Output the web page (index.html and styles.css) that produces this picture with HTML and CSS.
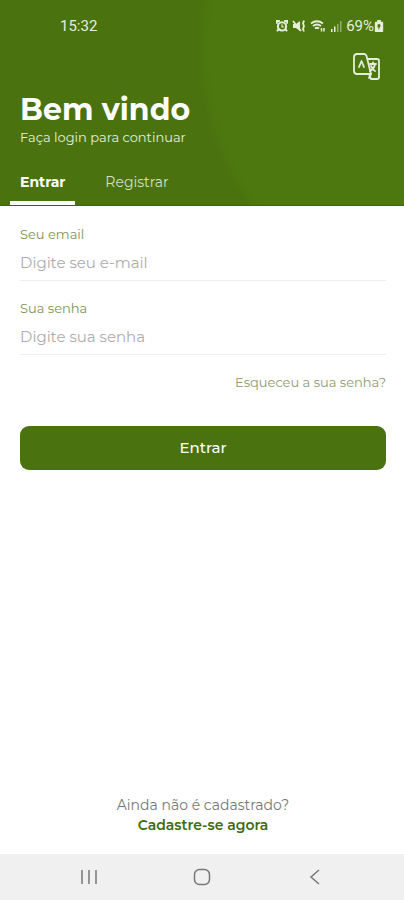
FILE: index.html
```html
<!DOCTYPE html>
<html lang="pt-BR">
<head>
    <meta charset="UTF-8">
    <meta name="viewport" content="width=device-width, initial-scale=1">
    <title>Entrar</title>
    <link rel="stylesheet" href="styles.css">
</head>
<body>
    <header class="header">
        <div class="status">
            <span class="status-time">15:32</span>
            <div class="status-icons">
                <svg width="12" height="12" viewBox="0 0 14 14" fill="none" stroke="currentColor" stroke-width="2.400">
                    <circle cx="7" cy="7.500" r="4.800"/>
                    <path d="M1 4.500V1h3.500M9.500 1H13v3.500M3 11l-2 2M11 11l2 2"/>
                    <path d="M7 5v3h2" stroke-width="1.300"/>
                </svg>
                <svg width="14" height="14" viewBox="0 0 14 14" fill="none" stroke="currentColor" stroke-width="1.800">
                    <path d="M1 5h3l4-3v10L4 9H1z" fill="currentColor" stroke="none"/>
                    <path d="M1 2l8 10"/>
                    <path d="M12 1.500l-1 3 1 2.500-1 3 1 2.500"/>
                </svg>
                <svg width="16" height="14" viewBox="0 0 16 14" fill="none" stroke="currentColor" stroke-width="1.800">
                    <path d="M1 4.500q6-4.500 12 0M3 7q4-3 8 0M5 9.500q2-1.500 4 0"/>
                    <path d="M11.500 9v3.500M14 9v3.500" stroke-width="1.500"/>
                </svg>
                <svg width="12" height="14" viewBox="0 0 12 14" fill="currentColor">
                    <path d="M1 10h1.500v3H1zM4 7.500h1.500V13H4z"/>
                    <path d="M7 5h1.500v8H7zM10 2h1.500v11H10z" opacity=".45"/>
                </svg>
                <span class="battery">69%
                    <svg width="10" height="13" viewBox="0 0 10 14">
                        <path d="M3 0h4v2h1.500q1 0 1 1v9q0 1-1 1h-7q-1 0-1-1V3q0-1 1-1H3z" fill="currentColor"/>
                        <path d="M3.500 4.500h2.500q1.500 1 0 3L4.500 11V8h-1z" fill="#4a730f"/>
                    </svg>
                </span>
            </div>
        </div>
        <div class="intro">
            <div>
                <h1>Bem vindo</h1>
                <p>Faça login para continuar</p>
            </div>
            <button class="language" type="button" aria-label="Idioma">
                <svg width="28" height="28" viewBox="0 0 28 28" fill="none" stroke="currentColor" stroke-width="1.800" stroke-linejoin="round" stroke-linecap="round">
                    <path d="M5 2h7q2 0 2.500 2L19 22H5q-3 0-3-3V5q0-3 3-3z"/>
                    <path d="M16 7h9q2 0 2 2v16q0 2-2 2h-6l-2-5"/>
                    <path d="M7 15l2.500-6L12 15"/>
                    <path d="M18 12h6M21 10.500V12M23 12q-1 5-5 7M19 14q2 4 4 5M19 22l-2 4"/>
                </svg>
            </button>
        </div>
        <nav class="tabs">
            <button class="tab active" type="button">Entrar</button>
            <button class="tab" type="button">Registrar</button>
        </nav>
    </header>

    <main>
        <form class="login">
            <div class="field">
                <label for="email">Seu email</label>
                <input type="email" id="email" name="email" placeholder="Digite seu e-mail">
            </div>
            <div class="field">
                <label for="password">Sua senha</label>
                <input type="password" id="password" name="password" placeholder="Digite sua senha">
            </div>
            <a class="forgot" href="#">Esqueceu a sua senha?</a>
            <button class="submit" type="submit">Entrar</button>
        </form>
        <div class="signup">
            <p>Ainda não é cadastrado?</p>
            <a href="#">Cadastre-se agora</a>
        </div>
    </main>

    <footer class="navbar">
        <button type="button" aria-label="Recentes">
            <svg width="18" height="18" viewBox="0 0 18 18" fill="none" stroke="currentColor" stroke-width="1.500">
                <path d="M2 2v14M9 2v14M16 2v14"/>
            </svg>
        </button>
        <button type="button" aria-label="Início">
            <svg width="18" height="18" viewBox="0 0 18 18" fill="none" stroke="currentColor" stroke-width="1.500">
                <rect x="1.500" y="1.500" width="15" height="15" rx="5"/>
            </svg>
        </button>
        <button type="button" aria-label="Voltar">
            <svg width="18" height="18" viewBox="0 0 18 18" fill="none" stroke="currentColor" stroke-width="1.500">
                <path d="M13 2L5 9l8 7"/>
            </svg>
        </button>
    </footer>
</body>
</html>
```
FILE: styles.css
```css
* {
    box-sizing: border-box;
}

body {
    display: flex;
    flex-direction: column;
    min-height: 100vh;
    margin: 0;
    background: white;
    font-family: Montserrat, Inter, sans-serif;
    font-size: 14px;
    line-height: 20px;
}

h1, p {
    margin: 0;
}

button {
    padding: 0;
    border: 0;
    background: none;
    color: inherit;
    font: inherit;
}

svg {
    display: block;
}

a {
    text-decoration: none;
}

.header {
    background: radial-gradient(circle at 472px 50px, #4d780f 262px, #4a730f 274px);
    border-bottom: 1px solid #3a650a;
    color: white;
}

.status {
    display: flex;
    align-items: center;
    justify-content: space-between;
    height: 52px;
    padding: 0 20px 0 60px;
    color: #e6eedb;
    font-family: Roboto, sans-serif;
    font-size: 15px;
}

.status-icons {
    display: flex;
    align-items: center;
    gap: 4px;
}

.battery {
    display: flex;
    align-items: center;
}

.intro {
    display: flex;
    justify-content: space-between;
    padding: 0 24px 0 20px;
}

.intro h1 {
    margin-top: 40px;
    font-size: 30px;
    line-height: 36px;
}

.intro p {
    color: #e6eedb;
    font-size: 13px;
    line-height: 18px;
}

.language {
    align-self: flex-start;
    color: #e6eedb;
}

.tabs {
    display: flex;
    gap: 20px;
    margin-top: 16px;
    padding: 0 10px;
}

.tab {
    height: 43px;
    padding: 0 10px;
    border-bottom: 4px solid transparent;
    color: #d3dfc2;
}

.tab.active {
    border-color: white;
    color: white;
    font-weight: 700;
}

main {
    display: flex;
    flex: 1;
    flex-direction: column;
    justify-content: space-between;
    padding: 18px 18px 19px 20px;
}

.login {
    display: flex;
    flex-direction: column;
}

.field {
    display: flex;
    flex-direction: column;
    margin-bottom: 17px;
    border-bottom: 1px solid #eeeeee;
}

.field label {
    color: #7c9355;
    font-size: 13px;
}

.field input {
    height: 36px;
    padding: 0;
    border: 0;
    outline: 0;
    background: none;
    color: #444444;
    font: inherit;
    font-size: 15px;
}

.field input::placeholder {
    color: #acacac;
}

.forgot {
    align-self: flex-end;
    color: #8b9b6c;
    font-size: 13px;
}

.submit {
    height: 44px;
    margin-top: 34px;
    border-radius: 9px;
    background: #4a730f;
    color: white;
    font-size: 15px;
    font-weight: 500;
}

.signup {
    text-align: center;
}

.signup p {
    color: #777777;
}

.signup a {
    color: #3f6b0c;
    font-weight: 600;
}

.navbar {
    display: flex;
    justify-content: space-around;
    padding: 0 32px;
    background: #f0f0f0;
    color: #777777;
}

.navbar button {
    padding: 14px 15px;
}
```
